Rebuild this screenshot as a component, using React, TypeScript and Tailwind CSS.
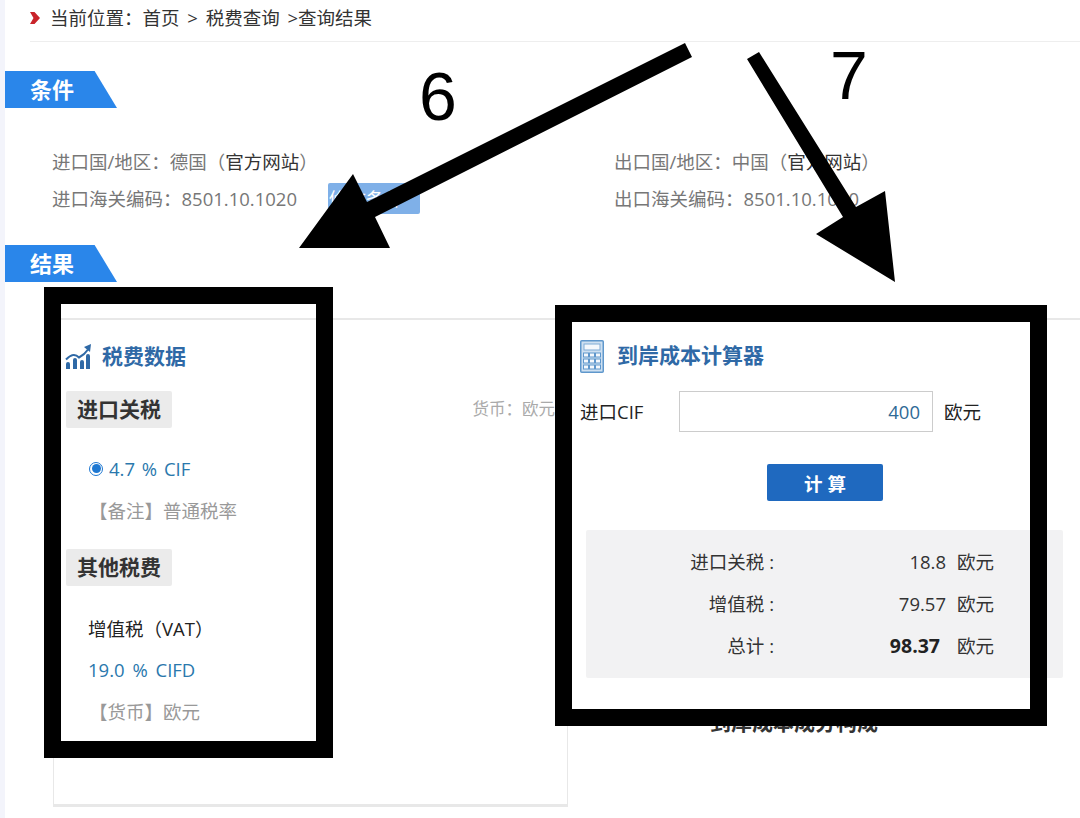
const flag = "flex h-[37px] w-[112px] items-center bg-[#2a86ea] pl-[25px] text-[22px] font-bold text-white [clip-path:polygon(0_0,80%_0,100%_100%,0_100%)]";
const tag = "flex h-[37px] w-[106px] items-center justify-center rounded-[2px] bg-[#ebebeb] text-[21px] font-bold text-[#333]";
const heading = "text-[21px] font-bold text-[#2f69a6]";

const results = [
  { label: "进口关税 :", value: "18.8" },
  { label: "增值税 :", value: "79.57" },
  { label: "总计 :", value: "98.37", bold: true },
];

function ChartIcon() {
  return (
    <svg width="27" height="26" viewBox="0 0 27 26" fill="#2f69a6">
      <path d="M1 25v-5q0-2 2-2t2 2v5zM8 25v-9q0-2 2-2t2 2v9zM15 25v-7q0-2 2-2t2 2v7zM21 25V12q0-2 2-2t2 2v13z" />
      <path d="M1 15.5c5-5 9-6 13-2 4-2 7-5 9-8" fill="none" stroke="#2f69a6" strokeWidth="2" />
      <path d="M19 3l7-3-1 8z" />
    </svg>
  );
}

function CalcIcon() {
  const keys = [0, 1, 2].flatMap((r) => [0, 1, 2].map((c) => ({ r, c })));
  return (
    <svg width="24" height="33" viewBox="0 0 24 33">
      <rect x="0.75" y="0.75" width="22.5" height="31.5" rx="1" fill="#cfe0f1" stroke="#5f97cc" strokeWidth="1.5" />
      <rect x="4" y="4" width="16" height="6" fill="#f4f8fc" stroke="#7fabd6" />
      {keys.map(({ r, c }) => (
        <rect key={`${r}-${c}`} x={3.5 + c * 6} y={13 + r * 6} width="5" height="4" fill="#f4f8fc" stroke="#5f97cc" />
      ))}
    </svg>
  );
}

export default function App() {
  return (
    <div className="relative h-[818px] w-[1080px] overflow-hidden border-l-[5px] border-[#f3f4fb] bg-white font-['Open_Sans','Noto_Sans_CJK_SC',sans-serif] text-[18.5px] text-[#333]">
      {/* breadcrumb */}
      <div className="ml-[25px] flex h-[42px] items-center border-b border-[#eeeeee] pb-[5px]">
        <svg width="10" height="12" viewBox="0 0 10 12" fill="#c9242b">
          <path d="M0 0h4.5L10 6l-5.500 6H0l3.500-6z" />
        </svg>
        <span className="ml-[10px] text-[#333] [word-spacing:3px]">当前位置：首页 &gt; 税费查询 &gt;查询结果</span>
      </div>

      <div className={`mt-[29px] ${flag}`}>条件</div>

      {/* conditions */}
      <div className="ml-[47px] mt-[35px] grid grid-cols-[562px_1fr] leading-[37px] text-[#777]">
        <div>
          进口国/地区：德国（<span className="text-[#333]">官方网站</span>）
        </div>
        <div>
          出口国/地区：中国（<span className="text-[#333]">官方网站</span>）
        </div>
        <div className="flex items-center">
          进口海关编码：8501.10.1020
          <span className="ml-[31px] flex h-[31px] w-[92px] items-center justify-center rounded-[2px] bg-[#7fb0e8] pr-[16px] text-white">修改条件</span>
        </div>
        <div>出口海关编码：8501.10.1020</div>
      </div>

      <div className={`mt-[28px] ${flag}`}>结果</div>

      {/* result panel */}
      <div className="ml-[48px] mt-[36px] flex h-[489px] border-t-2 border-[#e8e8e8]">
        <div className="w-[515px] border-x border-b-[3px] border-[#e8e8e8] pl-[12px] pr-[12px]">
          <div className="ml-[-1px] mt-[22px] flex h-[30px] items-center gap-[10px]">
            <ChartIcon />
            <span className={heading}>税费数据</span>
          </div>
          <div className="mt-[19px] flex items-center justify-between">
            <div className={tag}>进口关税</div>
            <span className="text-[16.5px] text-[#aaa]">货币：欧元</span>
          </div>
          <div className="ml-[23px] mt-[22px] flex h-[37px] items-center text-[#2a78ad] [word-spacing:2px]">
            <span className="flex h-[14px] w-[14px] items-center justify-center rounded-full border border-[#1e78d2]">
              <span className="h-[9px] w-[9px] rounded-full bg-[#1e78d2]" />
            </span>
            <span className="ml-[6px]">4.7 % CIF</span>
          </div>
          <div className="ml-[23px] mt-[5px] leading-[37px] text-[#999]">【备注】普通税率</div>
          <div className={`mt-[20px] ${tag}`}>其他税费</div>
          <div className="ml-[22px] mt-[25px] leading-[36px] text-[#222]">增值税（VAT）</div>
          <div className="ml-[22px] mt-[5px] leading-[36px] text-[#2a78ad] [word-spacing:3px]">19.0 % CIFD</div>
          <div className="ml-[23px] mt-[6px] leading-[36px] text-[#999]">【货币】欧元</div>
        </div>

        <div className="flex-1 pl-[12px]">
          <div className="mt-[20px] flex h-[32px] items-center gap-[13px]">
            <CalcIcon />
            <span className={heading}>到岸成本计算器</span>
          </div>
          <div className="mt-[19px] flex h-[41px] items-center text-[#222]">
            <span className="w-[99px]">进口CIF</span>
            <div className="flex h-full w-[254px] items-center justify-end border border-[#cccccc] pr-[12px] text-[#2f6a96]">400</div>
            <span className="ml-[11px]">欧元</span>
          </div>
          <button className="ml-[187px] mt-[32px] flex h-[37px] w-[116px] items-center justify-center rounded-[2px] bg-[#1f69bf] pt-[2px] font-bold text-white">
            计 算
          </button>
          <div className="ml-[6px] mt-[29px] w-[477px] rounded-[2px] bg-[#f2f2f3] py-[11px] text-[#333]">
            {results.map((row) => (
              <div key={row.label} className="flex h-[42px] items-center">
                <span className="w-[188px] text-right">{row.label}</span>
                <span className={`w-[172px] text-right ${row.bold ? "pr-[6px] text-[19.5px] font-bold text-[#222]" : ""}`}>{row.value}</span>
                <span className="ml-[11px]">欧元</span>
              </div>
            ))}
          </div>
          <div className="ml-[130px] mt-[29px] text-[21px] font-bold leading-[30px] text-[#333]">到岸成本成分构成</div>
        </div>
      </div>

      {/* hand-drawn annotations on top of the screenshot */}
      <div className="absolute left-[39px] top-[287px] h-[471px] w-[289px] border-[17px] border-black" />
      <div className="absolute left-[550px] top-[305px] h-[421px] w-[492px] border-[17px] border-black" />
      <span className="absolute left-[414px] top-[57px] font-['Liberation_Sans',sans-serif] text-[68px] leading-[78px] text-black">6</span>
      <span className="absolute left-[825px] top-[37px] font-['Liberation_Sans',sans-serif] text-[68px] leading-[76px] text-black">7</span>
      <svg className="absolute left-[-5px] top-0" width="1080" height="818" fill="#000">
        <path d="M685 43L692 57 375 217 390 248H299L353 174 367 202z" />
        <path d="M747 59L759 52 856 207 885 191 895 282 816 234 843 217z" />
      </svg>
    </div>
  );
}
